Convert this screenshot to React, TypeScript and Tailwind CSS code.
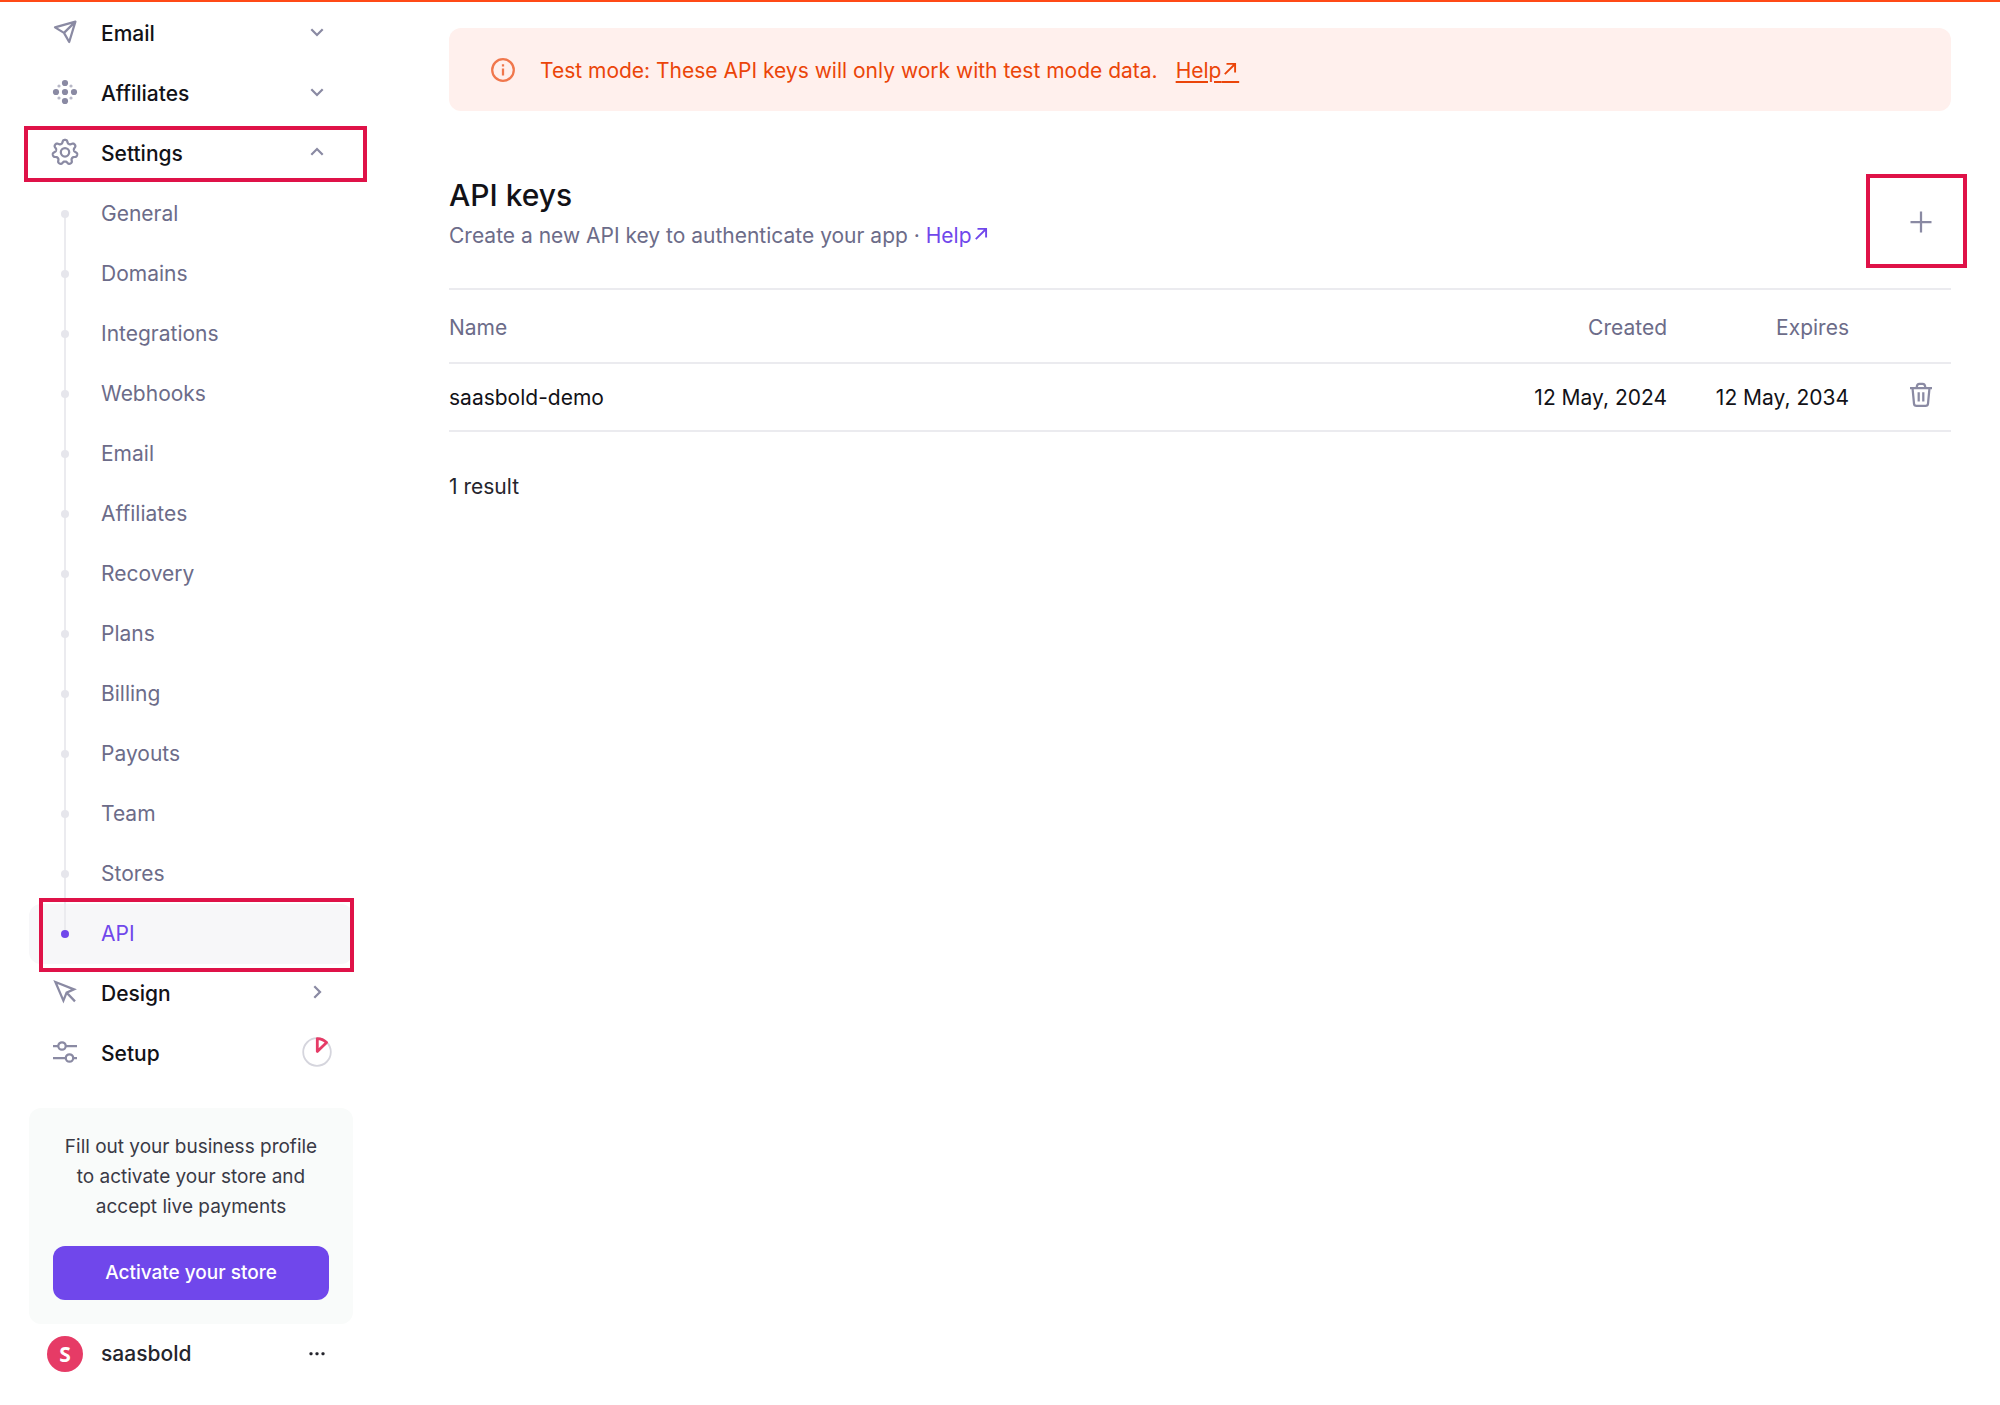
import type { ReactNode } from "react";

function Icon({ children, size = 24, className = "" }: { children: ReactNode; size?: number; className?: string }) {
  return (
    <svg
      aria-hidden="true"
      width={size}
      height={size}
      viewBox={`0 0 ${size} ${size}`}
      fill="none"
      stroke="currentColor"
      strokeWidth={2.25}
      className={`shrink-0 overflow-visible ${className}`}
    >
      {children}
    </svg>
  );
}

const PlaneIcon = () => (
  <Icon>
    <path d="M2 7.4 22.4 1.6 16.2 22 11 12.9ZM11 12.9 22.4 1.6" strokeLinejoin="round" />
  </Icon>
);

const AffiliatesIcon = () => (
  <Icon>
    <g fill="currentColor" stroke="none">
      <circle cx="12" cy="3" r="3.1" />
      <circle cx="12" cy="12" r="3.1" />
      <circle cx="12" cy="21" r="3.1" />
      <circle cx="3" cy="12" r="3.1" />
      <circle cx="21" cy="12" r="3.1" />
      <g opacity="0.6">
        <circle cx="6" cy="6" r="1.6" />
        <circle cx="18" cy="6" r="1.6" />
        <circle cx="6" cy="18" r="1.6" />
        <circle cx="18" cy="18" r="1.6" />
      </g>
    </g>
  </Icon>
);

// Outline of a seven-toothed gear with rounded teeth, centred on (12, 12).
const gearPoints = Array.from({ length: 210 }, (_, i) => {
  const a = (i / 210) * Math.PI * 2;
  const r = 10.8 + (1.6 * Math.tanh(1.6 * Math.cos(7 * a))) / Math.tanh(1.6);
  return `${(12 + r * Math.sin(a)).toFixed(2)},${(12.3 - r * Math.cos(a)).toFixed(2)}`;
}).join(" ");

const GearIcon = () => (
  <Icon>
    <polygon points={gearPoints} strokeLinejoin="round" />
    <circle cx="12" cy="12.3" r="4.2" />
  </Icon>
);

const CursorIcon = () => (
  <Icon>
    <path d="M2.4 2 21 9.4 13.6 12.6 10.4 20.6ZM13.6 12.6 22 21.4" />
  </Icon>
);

const SlidersIcon = () => (
  <Icon>
    <path d="M0 6H5M13 6H24M0 18H12.5M20.5 18H24" />
    <circle cx="9" cy="6" r="3.7" />
    <circle cx="16.5" cy="18" r="3.7" />
  </Icon>
);

const ChevronDown = () => (
  <Icon>
    <path d="M6.3 9.3 12 15l5.7-5.7" />
  </Icon>
);
const ChevronUp = () => (
  <Icon>
    <path d="M6.3 14.7 12 9l5.7 5.7" />
  </Icon>
);
const ChevronRight = () => (
  <Icon>
    <path d="M9.3 6.3 15 12l-5.7 5.7" />
  </Icon>
);

const ProgressIcon = () => (
  <Icon>
    <circle cx="12" cy="12" r="13.8" stroke="#d5d5dd" strokeWidth="1.8" />
    <path d="M12.3 -1.4A14 14 0 0 1 21.6 2.4L12.3 11.4Z" stroke="#e63b66" strokeWidth="2.8" strokeLinejoin="round" />
  </Icon>
);

const InfoIcon = () => (
  <Icon className="opacity-70">
    <circle cx="12" cy="12" r="10.8" />
    <path d="M12 10.5V17.5M12 6.3V8.6" />
  </Icon>
);

const TrashIcon = () => (
  <Icon>
    <path d="M1 5H23M3.5 5 5 20.6Q5.2 22.9 7.5 22.9H16.5Q18.8 22.9 19 20.6L20.5 5M7.7 5Q7.7 0.9 10.5 0.9H13.5Q16.3 0.9 16.3 5M9.7 9.3V18.5M14.3 9.3V18.5" />
  </Icon>
);

function HelpLink({ className }: { className: string }) {
  return (
    <a href="#" className={`whitespace-nowrap ${className}`}>
      Help
      <span className="relative">
        {"\u00a0\u00a0\u00a0"}
        <svg
          aria-hidden="true"
          width="14"
          height="14"
          viewBox="0 0 14 14"
          fill="none"
          stroke="currentColor"
          strokeWidth="1.9"
          className="absolute top-1 left-0.5"
        >
          <path d="M1.8 12.2 12 2M3.5 1.9H12.1V10.5" />
        </svg>
      </span>
    </a>
  );
}

function Highlight({ className }: { className: string }) {
  return <span aria-hidden="true" className={`pointer-events-none absolute border-4 border-[#df1248] ${className}`} />;
}

function NavItem({ icon, label, end, children }: { icon: ReactNode; label: string; end: ReactNode; children?: ReactNode }) {
  return (
    <button type="button" className="relative flex h-[60px] w-full items-center gap-6 px-6 text-left text-[#8a8aa3]">
      <span className="-mt-1">{icon}</span>
      <span className="flex-1 font-medium text-[#121217]">{label}</span>
      <span className="-mt-1">{end}</span>
      {children}
    </button>
  );
}

const settings = [
  "General",
  "Domains",
  "Integrations",
  "Webhooks",
  "Email",
  "Affiliates",
  "Recovery",
  "Plans",
  "Billing",
  "Payouts",
  "Team",
  "Stores",
  "API",
];

function SettingsItem({ label, first, active }: { label: string; first: boolean; active: boolean }) {
  return (
    <li className="relative">
      <a
        href="#"
        aria-current={active ? "page" : undefined}
        className={`flex h-[60px] items-center gap-6 rounded-xl px-6 ${active ? "bg-[#f7f7f9] text-[#7047eb]" : "text-[#6c6c89]"}`}
      >
        <span className="flex w-6 justify-center">
          <span className={`relative z-10 size-2 rounded-full ${active ? "bg-[#7047eb]" : "bg-[#e6e6ec]"}`} />
        </span>
        {label}
      </a>
      {!first && <span aria-hidden="true" className="absolute -top-[30px] left-[35px] h-[60px] w-0.5 bg-[#ebebef]" />}
      {active && <Highlight className="-top-1.5 -right-px left-2.5 z-20 h-[74px]" />}
    </li>
  );
}

function Sidebar() {
  return (
    <aside className="w-[324px] shrink-0 pt-0.5">
      <nav aria-label="Main">
        <NavItem icon={<PlaneIcon />} label="Email" end={<ChevronDown />} />
        <NavItem icon={<AffiliatesIcon />} label="Affiliates" end={<ChevronDown />} />
        <NavItem icon={<GearIcon />} label="Settings" end={<ChevronUp />}>
          <Highlight className="top-0.5 -right-3.5 -left-[5px] h-14" />
        </NavItem>
        <ul>
          {settings.map((label, i) => (
            <SettingsItem key={label} label={label} first={i === 0} active={label === "API"} />
          ))}
        </ul>
        <NavItem icon={<CursorIcon />} label="Design" end={<ChevronRight />} />
        <NavItem icon={<SlidersIcon />} label="Setup" end={<ProgressIcon />} />
      </nav>
      <section className="mt-6 rounded-xl bg-[#f9fbfa] p-6 text-center">
        <p className="text-[19px] leading-[30px] whitespace-nowrap text-[#3a3a46]">
          Fill out your business profile
          <br />
          to activate your store and
          <br />
          accept live payments
        </p>
        <button type="button" className="mt-6 h-[54px] w-full rounded-xl bg-[#7047eb] text-[19px] font-medium text-white">
          Activate your store
        </button>
      </section>
      <button type="button" className="flex h-[60px] w-full items-center gap-[18px] pr-6 pl-[18px] text-left">
        <span className="flex size-9 items-center justify-center rounded-full bg-[#e63b66] font-['Open_Sans',sans-serif] font-bold text-white">
          S
        </span>
        <span className="flex-1 font-medium text-[#25252d]">saasbold</span>
        <Icon className="text-[#25252d]">
          <g fill="currentColor" stroke="none">
            <rect x="4.5" y="10.3" width="3" height="3" rx="1" />
            <rect x="10.5" y="10.3" width="3" height="3" rx="1" />
            <rect x="16.5" y="10.3" width="3" height="3" rx="1" />
          </g>
        </Icon>
      </button>
    </aside>
  );
}

function KeysTable() {
  return (
    <table className="mt-[37px] w-full table-fixed border-t-2 border-[#ebebef]">
      <thead>
        <tr className="h-[74px] border-b-2 border-[#ebebef] text-[#6c6c89]">
          <th scope="col" className="pt-1 text-left font-normal">Name</th>
          <th scope="col" className="w-[182px] pt-1 pr-[42px] text-right font-normal">Created</th>
          <th scope="col" className="w-[182px] pt-1 pr-[42px] text-right font-normal">Expires</th>
          <td className="w-[60px]" />
        </tr>
      </thead>
      <tbody>
        <tr className="h-[68px] border-b-2 border-[#ebebef] text-[#121217]">
          <td className="pt-0.5">saasbold-demo</td>
          <td className="pt-0.5 pr-[42px] text-right whitespace-nowrap">12 May, 2024</td>
          <td className="pt-0.5 pr-[42px] text-right whitespace-nowrap">12 May, 2034</td>
          <td>
            <button type="button" aria-label="Delete key" className="mx-auto -mt-1 block text-[#8a8aa3]">
              <TrashIcon />
            </button>
          </td>
        </tr>
      </tbody>
    </table>
  );
}

export default function App() {
  return (
    <div className="border-t-2 border-[#ff4a17] bg-white pb-5 font-['Inter',sans-serif] text-[21px] leading-[30px]">
      <div className="flex gap-24 pr-[49px] pl-[29px]">
        <Sidebar />
        <main className="min-w-0 flex-1 pt-[26px]">
          <div role="status" className="flex h-[83px] items-center rounded-xl bg-[#fff0ed] px-[42px] text-[#eb4509]">
            <InfoIcon />
            <p className="mt-0.5 ml-[25px]">
              Test mode: These API keys will only work with test mode data.
              <HelpLink className="ml-[18px] underline decoration-2 underline-offset-3" />
            </p>
          </div>
          <header className="mt-[66px] flex items-end justify-between">
            <div>
              <h1 className="text-[30px] leading-9 font-medium text-[#121217]">API keys</h1>
              <p className="mt-2 text-[#6c6c89]">
                Create a new API key to authenticate your app · <HelpLink className="text-[#7047eb]" />
              </p>
            </div>
            <button type="button" aria-label="Create API key" className="relative flex size-[60px] items-center justify-center text-[#8a8aa3]">
              <Icon>
                <path d="M12 2.5V23.5M1.5 13H22.5" />
              </Icon>
              <Highlight className="-top-[17px] -left-[25px] h-[94px] w-[101px]" />
            </button>
          </header>
          <KeysTable />
          <p className="mt-10 text-[#25252d]">1 result</p>
        </main>
      </div>
    </div>
  );
}
